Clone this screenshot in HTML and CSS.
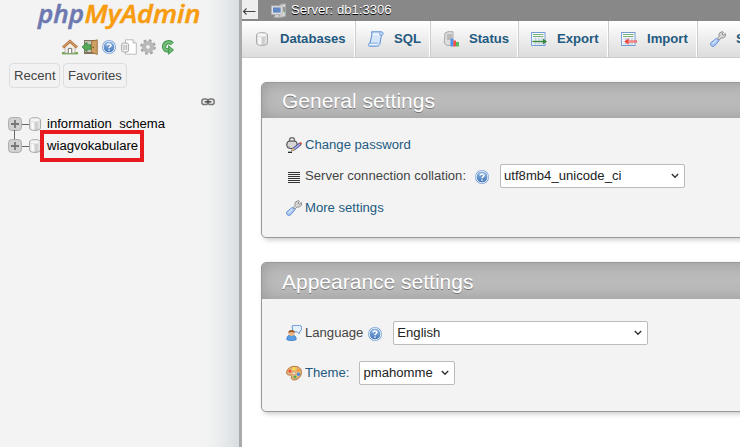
FILE: index.html
```html
<!DOCTYPE html>
<html lang="en">
<head>
<meta charset="utf-8">
<title>phpMyAdmin</title>
<link rel="stylesheet" href="styles.css">
</head>
<body>
<svg class="defs" width="0" height="0">
  <defs>
    <linearGradient id="gBlue" x1="0" y1="0" x2="0" y2="1"><stop offset="0" stop-color="#8fb6e2"/><stop offset="1" stop-color="#4376b8"/></linearGradient>
    <linearGradient id="gCyl"><stop offset="0" stop-color="#d8d8d8"/><stop offset=".3" stop-color="#fff"/><stop offset=".6" stop-color="#c8c8c8"/><stop offset="1" stop-color="#eee"/></linearGradient>
    <symbol id="help" viewBox="0 0 16 16"><circle cx="8" cy="8" r="7" fill="#7fa6d8"/><circle cx="8" cy="8" r="5.8" fill="url(#gBlue)" stroke="#dfeaf7" stroke-width="1"/><path d="M6 6.6C6 4.3 10 4.4 10 6.4C10 7.7 8 7.8 8 9.2M8 10.4V11.8" fill="none" stroke="#fff" stroke-width="1.5"/></symbol>
    <symbol id="db" viewBox="0 0 16 16"><path d="M2.5 4C2.5 .8 13.5 .8 13.5 4V12C13.5 15.2 2.5 15.2 2.5 12Z" fill="url(#gCyl)" stroke="#aaa"/><ellipse cx="8" cy="4" rx="5" ry="2" fill="#f5f5f5" stroke="#ccc" stroke-width=".6"/></symbol>
    <symbol id="wrench" viewBox="0 0 16 16"><path d="M7.5 7.5L9 5.5V2.5L12 .6L13.6 1.4L12 3L13 4.3L15.4 2.6L15.5 5L13.5 7H11L9 9.2Z" fill="#d5d5d5" stroke="#888" stroke-width=".9"/><path d="M6.5 7.2L9 9.7L4.8 14.7C2.5 16.8-.6 14 .8 11.8Z" fill="#a9c6f4" stroke="#608bd3" stroke-width=".9"/><path d="M6.3 9L2.6 12.8" stroke="#d6e5fc" stroke-width="1.2"/></symbol>
    <symbol id="sheet" viewBox="0 0 16 16"><rect x=".6" y="1.5" width="13.4" height="13" fill="#fff" stroke="#719bd3"/><path d="M2 3.5H12.5M2 5.5H12.5" stroke="#79b179"/><path d="M2 8H12.5M2 10.5H12.5M2 12.8H12.5M4.7 6V14M8 6V14M11 6V14" stroke="#b7c8df" stroke-width=".8"/></symbol>
    <symbol id="plus" viewBox="0 0 15 15"><rect x=".6" y=".6" width="12.8" height="12.8" rx="3" fill="#d2d2d2" stroke="#aaa"/><path d="M3 7H11M7 3V11" stroke="#777" stroke-width="1.8"/></symbol>
  </defs>
</svg>
<div class="page">
  <aside class="nav">
    <svg class="logo" width="190" height="32"><text class="php" x="3" y="23" textLength="46" lengthAdjust="spacingAndGlyphs">php</text><text class="admin" x="49.5" y="23" textLength="116" lengthAdjust="spacingAndGlyphs">MyAdmin</text></svg>
    <div class="tools">
      <svg viewBox="0 0 16 16"><path d="M0 14.2H16" stroke="#76a858" stroke-width="2.4"/><path d="M3 7L8 3L13 7V14H3Z" fill="#f5eee4" stroke="#aaa" stroke-width=".7"/><path d="M6.3 14V9.4H9.7V14" fill="#fff" stroke="#777"/><path d="M1 8.5L8 2.3L15 8.5" fill="none" stroke="#a86730" stroke-width="2.8"/><path d="M1 8.2L8 2L15 8.2" fill="none" stroke="#d7a06c" stroke-width="1.3"/></svg>
      <svg viewBox="0 0 16 16"><path d="M2 1H14V15H2Z" fill="#827058"/><path d="M3 2H10V13H3Z" fill="#c2c7ba"/><path d="M9.5 2.3L15.3 .8V15.5L9.5 13.5Z" fill="#cf9f64" stroke="#9b6c37" stroke-width=".8"/><path d="M0 8L5 3.2V5.8H9V10.3H5V12.8Z" fill="#58a958" stroke="#337c38" stroke-width=".7"/><circle cx="11.2" cy="8.5" r=".8" fill="#735023"/></svg>
      <svg><use href="#help"/></svg>
      <svg viewBox="0 0 16 16"><path d="M4.5 .8H12L15.3 4V15.2H4.5Z" fill="#fff" stroke="#bbb"/><path d="M12 .8V4H15.3" fill="#eee" stroke="#bbb"/><rect x=".6" y="4" width="7" height="9" rx="2" fill="#eee" stroke="#aaa"/><path d="M3 6V11M5.3 6V11" stroke="#aaa"/></svg>
      <svg viewBox="0 0 16 16"><circle cx="8" cy="8" r="6.5" fill="none" stroke="#a2a2a2" stroke-width="2.6" stroke-dasharray="2.7 2.4"/><circle cx="8" cy="8" r="4.3" fill="none" stroke="#b9b9b9" stroke-width="3.6"/><circle cx="8" cy="8" r="2.4" fill="#f3f3f3" stroke="#999" stroke-width=".7"/></svg>
      <svg viewBox="0 0 16 16"><path d="M12.3 4.8C9 1.4 4 3.8 4 7.8C4 10.6 6 11.6 8.5 11.3" fill="none" stroke="#3c9149" stroke-width="4.2"/><path d="M12.3 4.8C9 1.4 4 3.8 4 7.8C4 10.6 6 11.6 8.5 11.3" fill="none" stroke="#73bd77" stroke-width="2.4"/><path d="M8.4 6.6L13.6 11L8.4 15.4Z" fill="#65b66c" stroke="#398c45" stroke-width=".8"/></svg>
    </div>
    <div class="quick"><span>Recent</span><span>Favorites</span></div>
    <div class="chain"><svg width="14" height="8" viewBox="0 0 14 8"><rect x=".8" y="1" width="6.2" height="5.6" rx="2.6" fill="none" stroke="#777" stroke-width="1.5"/><rect x="7" y="1" width="6.2" height="5.6" rx="2.6" fill="none" stroke="#777" stroke-width="1.5"/><path d="M3.5 3.8H10.5" stroke="#444" stroke-width="1.4"/></svg></div>
    <div class="tree">
      <div class="node"><svg class="plus"><use href="#plus"/></svg><i class="branch"></i><svg class="dbi"><use href="#db"/></svg><span class="dbname">information_schema</span></div>
      <div class="node linked"><svg class="plus"><use href="#plus"/></svg><i class="branch"></i><svg class="dbi"><use href="#db"/></svg><span class="dbname">wiagvokabulare</span><b class="mark"></b></div>
    </div>
  </aside>
  <main class="main">
    <header class="server">
      <span class="back"><svg width="16" height="19"><path d="M1.5 11.5H13.5M4.5 8.5L1.5 11.5L4.5 14.5" fill="none" stroke="#444" stroke-width="1.1"/></svg></span>
      <svg class="host" viewBox="0 0 16 16"><path d="M9 1.5L14.5 .7V13.3L9 14.5Z" fill="#d3d3d3" stroke="#aaa" stroke-width=".7"/><path d="M12 5H14M12 7H14" stroke="#555"/><path d="M12.7 8H14V9.3H12.7Z" fill="#55b655"/><rect x=".7" y="3" width="10.3" height="8.2" fill="#eee" stroke="#bbb"/><rect x="2" y="4.4" width="7.7" height="5.3" fill="#6288c4"/><path d="M4 12H8L9 14.5H3Z" fill="#ccc"/></svg>
      <span>Server: db1:3306</span>
    </header>
    <nav class="tabs">
      <a class="t1"><svg><use href="#db"/></svg>Databases</a>
      <a class="t2"><svg viewBox="0 0 16 16"><path d="M3.5 .8H13C16 .8 15.6 4.3 13.5 4.2L11.7 13.5C11 15.2 9.5 15.2 8.8 15.2H1.4C-.4 14.5 .4 12 2 12.2L4 3Z" fill="#d4e6fc" stroke="#5c8ed3"/><path d="M5 3.5H11M2 13H9.5" stroke="#fff"/><path d="M12.2 1.2L11.7 4H13.8M10 12.2H2" fill="none" stroke="#729bd5" stroke-width=".8"/></svg>SQL</a>
      <a class="t3"><svg viewBox="0 0 16 16"><path d="M2 2L5 .7H10V14L4 14.5L1.2 12Z" fill="#ddd" stroke="#aaa"/><path d="M4 4H9M4 6H9M4 8H8" stroke="#888" stroke-width=".8"/><path d="M7.5 7.5H10.3V15.5H7.5Z" fill="#4e92ef"/><path d="M10.3 9.5H13V15.5H10.3Z" fill="#ee514c"/><path d="M13 11H16V15.5H13Z" fill="#55bd5b"/></svg>Status</a>
      <a class="t4"><svg viewBox="0 0 16 16"><use href="#sheet"/><path d="M1.5 9.8H12V7.6L16 10.5L12 13.4V11.2H1.5Z" fill="#39873c"/></svg>Export</a>
      <a class="t5"><svg viewBox="0 0 16 16"><use href="#sheet"/><path d="M16 9.5H7.5V7.2L3.3 10.5L7.5 13.7V11.5H16Z" fill="#ef4540"/><path d="M7 10.5H15" stroke="#ff9a90" stroke-width=".8"/></svg>Import</a>
      <a class="t6"><svg><use href="#wrench"/></svg>Settings</a>
    </nav>
    <section class="panel general">
      <h2>General settings</h2>
      <div class="row link pass"><svg viewBox="0 0 16 16"><path d="M3.5 5V2.8C3.5-.1 8.5-.1 8.5 2.8V5" fill="none" stroke="#777" stroke-width="1.5"/><rect x=".8" y="4" width="10.4" height="7.4" rx="3" fill="#bbb" stroke="#444"/><path d="M2 6H10M2 8H10M4 10H8" stroke="#f1f1f1"/><path d="M5.5 14L7 11L13.5 6L15 8L8.5 13Z" fill="#9aa2e5" stroke="#424875" stroke-width=".8"/><path d="M13.3 5.7L15 5L16 6.7L15 8Z" fill="#d9492f"/><path d="M6.8 11L8.7 13L5.5 14Z" fill="#efc34b"/><path d="M2 15.3H6" stroke="#111" stroke-width="1.2"/></svg><span>Change password</span></div>
      <div class="row coll"><svg viewBox="0 0 16 16"><path d="M2 4.5H14M2 6.5H14M2 8.5H14M2 10.5H14M2 12.5H14M2 14.5H14" stroke="#333" stroke-width="1"/></svg><span>Server connection collation:</span><svg class="q"><use href="#help"/></svg><span class="select s1">utf8mb4_unicode_ci<svg viewBox="0 0 8 6"><path d="M.8 1L4 4.2L7.2 1"/></svg></span></div>
      <div class="row link more"><svg><use href="#wrench"/></svg><span>More settings</span></div>
    </section>
    <section class="panel appearance">
      <h2>Appearance settings</h2>
      <div class="row lang"><svg viewBox="0 0 16 16"><path d="M6 1C8 0 14 0 15.3 1.2C16.2 3 15.6 5.6 14 6.3L13 8.8L11.2 6.8H7Z" fill="#e6f1ff" stroke="#6696dc"/><path d="M.8 14.6C.8 10.5 3 10 5.5 10S10.2 10.6 10.2 14.6C8 16 3 16 .8 14.6Z" fill="#579ee9" stroke="#2c70bd" stroke-width=".7"/><circle cx="5.5" cy="8" r="3" fill="#eab484"/><path d="M2.3 8C1.8 4 9.3 4 8.8 8C7 6.6 4 6.5 2.3 8Z" fill="#94572c"/></svg><span>Language</span><svg class="q"><use href="#help"/></svg><span class="select s2">English<svg viewBox="0 0 8 6"><path d="M.8 1L4 4.2L7.2 1"/></svg></span></div>
      <div class="row link theme"><svg viewBox="0 0 16 16"><path d="M.7 7C1.5-.2 15-.8 15.4 6.5C16 13.6 8 17 5.5 13.8C4.5 12.4 6.4 11.5 5 10.4C3.5 9.5 .3 11 .7 7Z" fill="#e5b67c" stroke="#b8773c"/><circle cx="4" cy="6" r="1.6" fill="#ee4a3d"/><circle cx="8" cy="3.7" r="1.6" fill="#f7e03b"/><circle cx="12.3" cy="5.2" r="1.5" fill="#f39b30"/><circle cx="12.5" cy="9.2" r="1.7" fill="#4a8fdc"/><circle cx="9" cy="12" r="1.6" fill="#56aa50"/><circle cx="8" cy="8.4" r="1.4" fill="#fff" stroke="#ba7d45" stroke-width=".6"/></svg><span>Theme:</span><span class="select s3">pmahomme<svg viewBox="0 0 8 6"><path d="M.8 1L4 4.2L7.2 1"/></svg></span></div>
    </section>
  </main>
</div>
</body>
</html>
```
FILE: styles.css
```css
* { box-sizing: border-box; }
body { margin: 0; background: #fff; color: #444; font: 13.12px/16px "Liberation Sans", Arial, sans-serif; overflow: hidden; }
.defs { display: block; height: 0; }
svg { display: block; flex: none; }
.page { display: flex; width: 740px; height: 447px; overflow: hidden; }
.nav { width: 242px; flex: none; border-right: 3px solid #aaa; background: linear-gradient(to right, #f3f3f3 0, #f3f3f3 206px, #e6e9eb 226px, #d8dde1 239px); }
.logo { margin-left: 35px; height: 32px; overflow: visible; font: italic 600 24.5px "Open Sans", sans-serif; }
.php { fill: #6c78af; stroke: #6c78af; stroke-width: .5px; }
.admin { fill: #f89c0e; stroke: #f89c0e; stroke-width: .5px; }
.tools { display: flex; gap: 3.6px; padding: 7px 0 0 62px; }
.tools svg { width: 16px; height: 16px; }
.quick { display: flex; gap: 3px; margin: 8px 0 0 9px; }
.quick span { height: 25px; padding: 0 4px; border: 1px solid #ddd; border-radius: 4px; background: #f2f2f2; line-height: 24px; }
.quick span:first-child { width: 51px; }
.quick span:last-child { width: 64px; }
.chain { padding: 10px 0 0 201px; }
.tree { margin: 7px 0 0 8px; color: #000; }
.node { display: flex; align-items: center; height: 22px; position: relative; }
.plus { width: 15px; height: 15px; }
.branch { width: 8px; height: 1px; margin-left: -1px; background: #666; }
.dbi { width: 16px; height: 16px; margin-right: 3px; margin-left: -3px; }
.dbname { margin-left: 1px; }
.linked::before { content: ""; position: absolute; left: 6px; top: -5px; width: 1px; height: 9px; background: #666; }
.mark { position: absolute; left: 32px; top: -5px; width: 104px; height: 32px; border: 4px solid #e91a1d; }
.main { width: 498px; flex: none; overflow: hidden; }
.server { display: flex; height: 21px; background: #888; color: #fff; text-shadow: 0 1px 0 #000; line-height: 19px; }
.back { width: 16px; height: 19px; background: #eee; margin-right: 13px; }
.host { width: 16px; height: 16px; margin: 3px 4px 0 0; }
.tabs { display: flex; width: 560px; height: 37px; border-bottom: 1px solid #ccc; background: linear-gradient(#fff, #dcdcdc); }
.tabs a { display: flex; align-items: center; flex: none; padding: 0 0 0 12px; border-left: 1px solid #ccc; border-right: 1px solid #fff; color: #235a81; font-weight: 700; }
.tabs svg { width: 16px; height: 16px; margin-right: 10px; }
.tabs .t1 { width: 113px; border-left: 0; }
.t2 { width: 75px; } .t3 { width: 88px; } .t4 { width: 90px; } .t5 { width: 89px; } .t6 { width: 100px; }
.panel { width: 520px; margin: 24px 0 0 19px; border: 1px solid #999; border-radius: 5px; background: #f3f3f3; box-shadow: 2px 2px 5px #ccc; }
.general { height: 156px; }
.appearance { height: 150px; }
h2 { height: 36px; margin: 0; padding: 0 0 0 20px; border-radius: 4px 0 0; background: #bbb; box-shadow: inset 0 0 15px #999; color: #fff; font-size: 21px; font-weight: 400; line-height: 37px; text-shadow: 0 1px 0 #777; }
.general h2 { height: 35px; line-height: 35px; }
.row { display: flex; align-items: center; height: 24px; padding-left: 24px; }
.row > svg { width: 16px; height: 16px; margin-right: 3px; }
.link { color: #235a81; }
.pass { margin-top: 15px; }
.coll { margin-top: 7px; }
.more { margin-top: 8px; }
.lang { margin-top: 22px; }
.theme { margin-top: 16px; }
.select { display: flex; align-items: center; justify-content: space-between; height: 24px; padding: 0 5px 0 3px; border: 1px solid #bbb; border-radius: 2px; background: #fff; color: #222; }
.select svg { width: 8px; height: 6px; }
.select path { fill: none; stroke: #333; stroke-width: 1.4; }
.s1 { width: 185px; margin-left: 7px; }
.s2 { width: 255px; margin-left: 7px; }
.s3 { width: 96px; margin-left: 10px; }
.row > .q { margin: 2px 3px 0 8px; }
.lang > .q { margin-left: 4px; }
```
